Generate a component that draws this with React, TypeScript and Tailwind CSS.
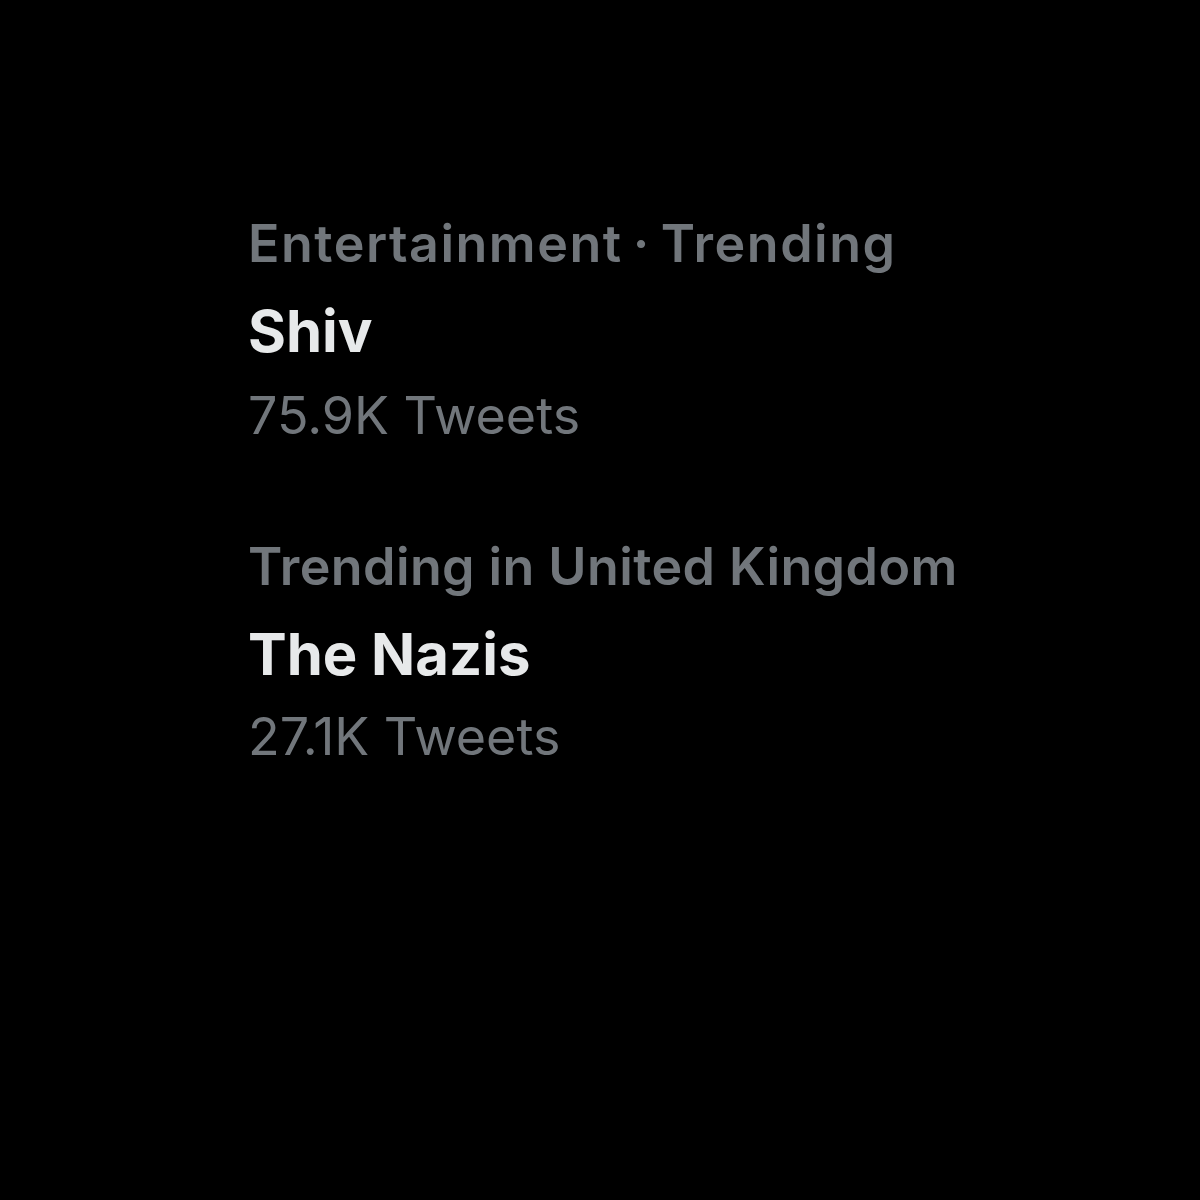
export default function App() {
  return (
    <div className="w-[1200px] h-[1200px] bg-black pl-[248px] pt-[204px] font-['Inter',sans-serif]">
      {/* Trend 1 */}
      <div className="text-[52px] leading-[80px] font-semibold tracking-[1.5px] text-[#71767b] whitespace-nowrap">
        Entertainment<span className="mx-[10px]">·</span>Trending
      </div>
      <div className="mt-[7px] text-[58px] leading-[80px] font-bold text-[#e7e9ea] whitespace-nowrap">
        Shiv
      </div>
      <div className="mt-[5px] text-[52px] leading-[80px] text-[#71767b] whitespace-nowrap">
        75.9K Tweets
      </div>

      {/* Trend 2 */}
      <div className="mt-[71px] text-[52px] leading-[80px] font-semibold tracking-[0.4px] text-[#71767b] whitespace-nowrap">
        Trending in United Kingdom
      </div>
      <div className="mt-[7px] text-[58px] leading-[80px] font-bold text-[#e7e9ea] whitespace-nowrap">
        The Nazis
      </div>
      <div className="mt-[3px] text-[52px] leading-[80px] text-[#71767b] whitespace-nowrap">
        27.1K Tweets
      </div>
    </div>
  );
}
